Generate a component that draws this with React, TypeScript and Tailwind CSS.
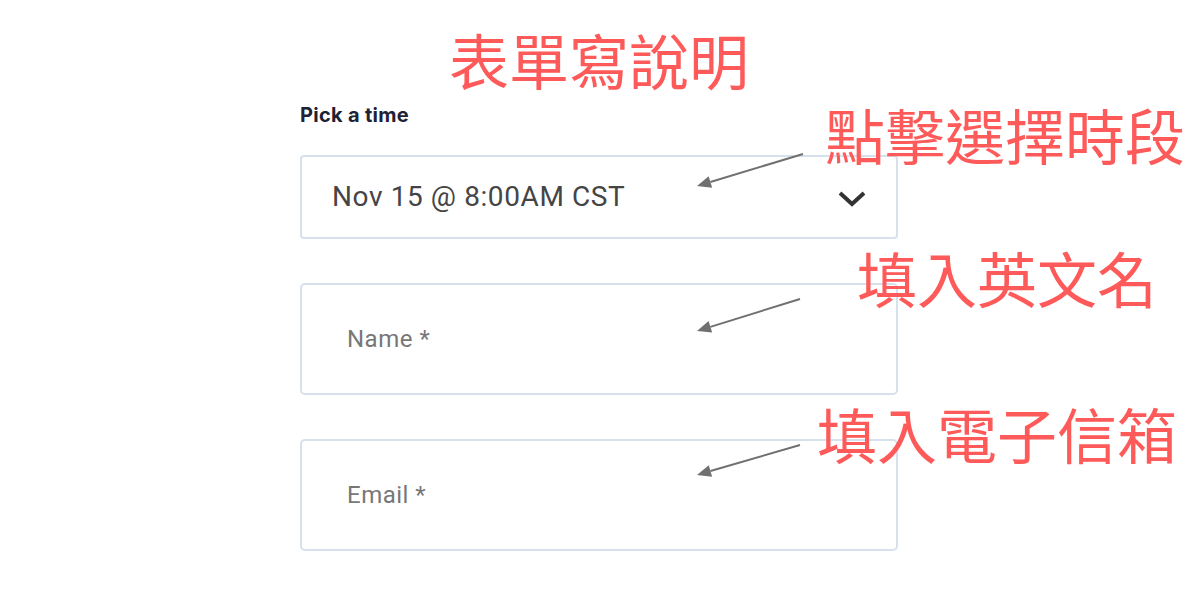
const notes = [
  { text: '表單寫說明', cls: 'left-[449px] top-[23px]' },
  { text: '點擊選擇時段', cls: 'left-[825px] top-[98px]' },
  { text: '填入英文名', cls: 'left-[857px] top-[241px]' },
  { text: '填入電子信箱', cls: 'left-[817px] top-[397px]' },
]

const arrows = [
  { x1: 803, y1: 154, x2: 697, y2: 186 },
  { x1: 800, y1: 299, x2: 697, y2: 331 },
  { x1: 800, y1: 445, x2: 697, y2: 475 },
]

function Arrow({ x1, y1, x2, y2 }: { x1: number; y1: number; x2: number; y2: number }) {
  const a = Math.atan2(y2 - y1, x2 - x1)
  const len = 14
  const w = 6
  const bx = x2 - len * Math.cos(a)
  const by = y2 - len * Math.sin(a)
  const px = -Math.sin(a) * w
  const py = Math.cos(a) * w
  return (
    <g>
      <line x1={x1} y1={y1} x2={bx} y2={by} stroke="#707070" strokeWidth={2} />
      <polygon points={`${x2},${y2} ${bx + px},${by + py} ${bx - px},${by - py}`} fill="#707070" />
    </g>
  )
}

export default function App() {
  return (
    <div className="relative w-[1200px] h-[600px] bg-white overflow-hidden font-['Roboto',sans-serif]">
      <div className="ml-[300px] w-[598px] pt-[101px] flex flex-col">
        <div className="text-[20px] font-bold text-[#1e2235] font-['Inter',sans-serif] leading-[28px] tracking-[0.3px]">
          Pick a time
        </div>
        <div className="mt-[26px] h-[84px] border-2 border-[#d7e1ed] rounded-[4px] flex items-center justify-between pl-[30px] pr-[29px]">
          <span className="text-[28px] text-[#454545] tracking-[0.6px]">Nov 15 @ 8:00AM CST</span>
          <svg width="30" height="20" viewBox="0 0 30 20" className="mt-[2px]">
            <path d="M3 5 L15 16 L27 5" fill="none" stroke="#333" strokeWidth="4" />
          </svg>
        </div>
        <div className="mt-[44px] h-[112px] border-2 border-[#d7e1ed] rounded-[5px] flex items-center pl-[45px]">
          <span className="text-[24px] text-[#777777] tracking-[0.5px]">Name *</span>
        </div>
        <div className="mt-[44px] h-[112px] border-2 border-[#d7e1ed] rounded-[5px] flex items-center pl-[45px]">
          <span className="text-[24px] text-[#777777] tracking-[0.5px]">Email *</span>
        </div>
      </div>

      <svg className="absolute inset-0 pointer-events-none" width="1200" height="600">
        {arrows.map((a, i) => (
          <Arrow key={i} {...a} />
        ))}
      </svg>

      {notes.map(n => (
        <div
          key={n.text}
          className={`absolute ${n.cls} text-[60px] leading-[72px] text-[#fe5a5a] font-['Noto_Sans_CJK_TC',sans-serif] whitespace-nowrap`}
        >
          {n.text}
        </div>
      ))}
    </div>
  )
}
